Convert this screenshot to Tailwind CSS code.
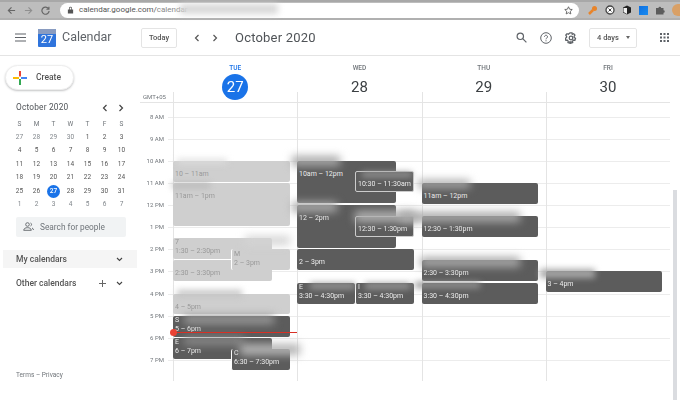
<!DOCTYPE html>
<html lang="en">
<head>
<meta charset="UTF-8">
<title>Calendar</title>
<script src="https://cdn.jsdelivr.net/npm/@tailwindcss/browser@4"></script>
</head>
<body class="bg-white text-[#3c4043] font-['Roboto',sans-serif] overflow-hidden">
<div class="w-[680px] h-[400px] relative overflow-hidden flex flex-col blur-[0.4px]">

  <!-- Browser bar -->
  <div class="h-[20px] shrink-0 bg-[#bdbdbd] border-t-2 border-[#a8a8a8] border-b-2 border-b-[#b0b0b0] flex items-center relative">
    <div class="w-[60px] flex items-center pl-[7px] gap-[8px] text-[#666]">
      <svg width="9" height="9" viewBox="0 0 10 10" fill="none" stroke="#666" stroke-width="1.3"><path d="M9 5H1.5M5 1.5 1.5 5 5 8.5"/></svg>
      <svg width="9" height="9" viewBox="0 0 10 10" fill="none" stroke="#8f8f8f" stroke-width="1.3"><path d="M1 5h7.5M5 1.5 8.5 5 5 8.5"/></svg>
      <svg width="9" height="9" viewBox="0 0 10 10" fill="none" stroke="#666" stroke-width="1.3"><path d="M8.5 3.2A4 4 0 1 0 9 5.5M8.8.8v2.8H6"/></svg>
    </div>
    <div class="ml-0 w-[519px] h-[15px] bg-white rounded-full flex items-center pl-[7px] text-[8px] text-[#555]">
      <svg width="7" height="8" viewBox="0 0 8 9" fill="#555"><path d="M1 4h6v4.500H1zM2.300 4V2.600a1.700 1.700 0 0 1 3.400 0V4h-.8V2.600a.9.9 0 0 0-1.800 0V4z"/></svg>
      <span class="ml-[5px]">calendar.google.com/<span class="text-[#888]">calendar</span></span>
      <svg class="ml-auto mr-[6px]" width="9" height="9" viewBox="0 0 12 12" fill="none" stroke="#555" stroke-width="1.100"><path d="m6 1 1.500 3.300 3.500.4-2.600 2.400.7 3.500L6 8.900l-3.100 1.700.7-3.500L1 4.700l3.500-.4z"/></svg>
    </div>
    <div class="flex items-center gap-[7px] ml-[8px]">
      <svg width="11" height="11" viewBox="0 0 11 11"><circle cx="7.500" cy="3.500" r="2.500" fill="#e8842a"/><path d="M6 5 2 9" stroke="#e8842a" stroke-width="2.500"/></svg>
      <svg width="10" height="10" viewBox="0 0 10 10"><circle cx="5" cy="5" r="4" fill="#fff" stroke="#444" stroke-width="1.300"/><path d="m3.500 3.500 3 3m0-3-3 3" stroke="#444"/></svg>
      <svg width="10" height="10" viewBox="0 0 10 10"><path d="M5 .5 9 2.500v5L5 9.500 1 7.500v-5z" fill="#222"/><path d="M5 3v6L1.500 7V3z" fill="#eee"/></svg>
      <div class="w-[9px] h-[9px] bg-[#1473e6] bg-linear-to-br from-[#0f6fe0] to-[#1a8cf0]"></div>
      <svg width="10" height="10" viewBox="0 0 10 10" fill="#5c5c5c"><path d="M1 3h2.500a1.300 1.300 0 0 1 2.600 0H8.500v2.300a1.200 1.200 0 0 1 0 2.500V9.500H1z"/></svg>
      <div class="w-[8px] h-[12px] rounded-l-full bg-[#d9a066]"></div>
    </div>
    <div class="absolute left-[180px] top-[2px] w-[98px] h-[10px] bg-[#d8d8d8] blur-[3px]"></div>
  </div>

  <!-- App header -->
  <header class="h-[36px] shrink-0 border-b border-[#e4e4e4] flex items-center relative">
    <svg class="ml-[15px]" width="11" height="9" viewBox="0 0 11 9" fill="none" stroke="#5f6368" stroke-width="1.100"><path d="M0 1h11M0 4.500h11M0 8h11"/></svg>
    <div class="ml-[12px] w-[18px] h-[18px] rounded-[1px] bg-[#2f74dc] relative overflow-hidden">
      <div class="h-[5px] bg-[#8a9cc0]"></div>
      <span class="absolute inset-x-0 top-[4px] text-center text-[11px] leading-[14px] text-white">27</span>
    </div>
    <span class="ml-[6px] w-[48px] whitespace-nowrap text-[12.500px] text-[#5f6368]">Calendar</span>
    <button class="ml-[31px] w-[36px] h-[20px] rounded-[2px] border border-[#e4e4e4] text-[7.500px] font-medium text-[#555]">Today</button>
    <svg class="ml-[17px]" width="6" height="8" viewBox="0 0 6 8" fill="none" stroke="#555" stroke-width="1.200"><path d="M4.500 1 1.500 4l3 3"/></svg>
    <svg class="ml-[12px]" width="6" height="8" viewBox="0 0 6 8" fill="none" stroke="#555" stroke-width="1.200"><path d="m1.500 1 3 3-3 3"/></svg>
    <span class="ml-[17px] text-[13px] tracking-[0.2px] text-[#4f5357]">October 2020</span>
    <svg class="ml-auto" width="11" height="11" viewBox="0 0 11 11" fill="none" stroke="#5f6368" stroke-width="1.200"><circle cx="4.300" cy="4.300" r="3.200"/><path d="m6.700 6.700 3.700 3.700"/></svg>
    <svg class="ml-[13px]" width="12" height="12" viewBox="0 0 12 12" fill="none" stroke="#5f6368"><circle cx="6" cy="6" r="5.300"/><path d="M4.500 4.700a1.500 1.500 0 1 1 2.300 1.300c-.6.400-.8.700-.8 1.300M6 8.300v1"/></svg>
    <svg class="ml-[13px]" width="12" height="12" viewBox="0 0 12 12" fill="none" stroke="#5f6368" stroke-width="1.300"><circle cx="6" cy="6" r="1.800"/><path d="M5 .8h2l.3 1.500 1.400-.6 1.200 1.400-.8 1.300.1 1.200 1.300.7-.6 1.900-1.500-.1-.9 1 .2 1.500-1.900.6-.8-1.300H5.800l-.9 1.300L3 10.600l.2-1.500-.9-1-1.500.1-.6-1.900 1.300-.7.100-1.200-.8-1.300 1.200-1.400 1.400.6z"/></svg>
    <div class="ml-[12px] w-[48px] h-[20px] rounded-[2px] border border-[#e4e4e4] flex items-center pl-[7px] text-[7.500px] font-medium text-[#555]">4 days
      <span class="ml-[7px] w-0 h-0 border-x-[2.500px] border-x-transparent border-t-[3px] border-t-[#666]"></span>
    </div>
    <svg class="ml-[23px] mr-[11px]" width="9" height="9" viewBox="0 0 9 9" fill="#5f6368">
      <rect width="2" height="2"/><rect x="3.500" width="2" height="2"/><rect x="7" width="2" height="2"/>
      <rect y="3.500" width="2" height="2"/><rect x="3.500" y="3.500" width="2" height="2"/><rect x="7" y="3.500" width="2" height="2"/>
      <rect y="7" width="2" height="2"/><rect x="3.500" y="7" width="2" height="2"/><rect x="7" y="7" width="2" height="2"/>
    </svg>
  </header>

  <div class="flex-1 flex min-h-0">
    <!-- Sidebar -->
    <aside class="w-[140px] shrink-0 flex flex-col relative">
      <div class="ml-[5px] mt-[9px] w-[69px] h-[25px] rounded-full bg-white border border-[#eee] shadow-[0_1px_2px_rgba(60,64,67,.3)] flex items-center">
        <svg class="ml-[7px]" width="14" height="14" viewBox="0 0 14 14">
          <path d="M6 0h2v5.500H6z" fill="#ea4335"/><path d="M8 6h6v2H8z" fill="#4285f4"/><path d="M6 8h2v6H6z" fill="#34a853"/><path d="M0 6h6v2H0z" fill="#fbbc04"/>
        </svg>
        <span class="ml-[9px] text-[8.500px] font-medium text-[#555]">Create</span>
      </div>
      <div class="ml-[16px] mt-[10px] flex items-center h-[15px]">
        <span class="text-[8.300px] tracking-[0.2px] text-[#4f5357]">October 2020</span>
        <svg class="ml-[34px]" width="6" height="8" viewBox="0 0 6 8" fill="none" stroke="#444" stroke-width="1.200"><path d="M4.500 1 1.500 4l3 3"/></svg>
        <svg class="ml-[10px]" width="6" height="8" viewBox="0 0 6 8" fill="none" stroke="#444" stroke-width="1.200"><path d="m1.500 1 3 3-3 3"/></svg>
      </div>
      <div class="ml-[11px] mt-[2.500px] w-[119px] grid grid-cols-7 text-center text-[6.500px] leading-[13.400px] text-[#555]">
        <span class="text-[#70757a]">S</span><span class="text-[#70757a]">M</span><span class="text-[#70757a]">T</span><span class="text-[#70757a]">W</span><span class="text-[#70757a]">T</span><span class="text-[#70757a]">F</span><span class="text-[#70757a]">S</span>
        <span class="text-[#80868b]">27</span><span class="text-[#80868b]">28</span><span class="text-[#80868b]">29</span><span class="text-[#80868b]">30</span><span>1</span><span>2</span><span>3</span>
        <span>4</span><span>5</span><span>6</span><span>7</span><span>8</span><span>9</span><span>10</span>
        <span>11</span><span>12</span><span>13</span><span>14</span><span>15</span><span>16</span><span>17</span>
        <span>18</span><span>19</span><span>20</span><span>21</span><span>22</span><span>23</span><span>24</span>
        <span>25</span><span>26</span><span class="mx-auto w-[13.400px] rounded-full bg-[#1a73e8] text-white font-medium">27</span><span>28</span><span>29</span><span>30</span><span>31</span>
        <span class="text-[#80868b]">1</span><span class="text-[#80868b]">2</span><span class="text-[#80868b]">3</span><span class="text-[#80868b]">4</span><span class="text-[#80868b]">5</span><span class="text-[#80868b]">6</span><span class="text-[#80868b]">7</span>
      </div>
      <div class="ml-[16px] mt-[5.500px] w-[110px] h-[20px] rounded-[2px] bg-[#f1f3f4] flex items-center pl-[7px] text-[8.300px] text-[#70757a]">
        <svg width="11" height="9" viewBox="0 0 11 9" fill="none" stroke="#5f6368" stroke-width=".9"><circle cx="4.500" cy="2.500" r="1.800"/><path d="M.7 8.300c.2-2 1.800-2.600 3.800-2.600s3.600.6 3.800 2.600zM7.500 1a1.600 1.600 0 0 1 0 3M9 6c.9.300 1.400 1 1.500 2"/></svg>
        <span class="ml-[6px]">Search for people</span>
      </div>
      <div class="ml-[3px] mt-[13px] w-[134px] h-[18px] bg-[#f5f5f5] flex items-center pl-[13px] pr-[14px] pt-[1px] text-[8.500px] font-medium text-[#555]">
        <span>My calendars</span>
        <svg class="ml-auto" width="7" height="5" viewBox="0 0 7 5" fill="none" stroke="#444" stroke-width="1.100"><path d="m1 1 2.500 2.500L6 1"/></svg>
      </div>
      <div class="ml-[3px] mt-[6px] w-[134px] h-[18px] flex items-center pl-[13px] pr-[14px] pt-[1px] text-[8.500px] font-medium text-[#555]">
        <span>Other calendars</span>
        <svg class="ml-auto" width="9" height="9" viewBox="0 0 9 9" fill="none" stroke="#666"><path d="M4.500 1v7M1 4.500h7"/></svg>
        <svg class="ml-[9px]" width="7" height="5" viewBox="0 0 7 5" fill="none" stroke="#444" stroke-width="1.100"><path d="m1 1 2.500 2.500L6 1"/></svg>
      </div>
      <div class="absolute left-[16px] top-[315px] text-[6.500px] text-[#70757a]">Terms – Privacy</div>
    </aside>

    <!-- Calendar -->
    <main class="flex-1 min-w-0 flex flex-col">
      <div class="h-[46px] shrink-0 flex pl-[33px] relative">
        <div class="w-[124.300px] flex flex-col items-center pt-[8px]">
          <span class="text-[6.500px] leading-[9px] font-medium text-[#1a73e8]">TUE</span>
          <span class="mt-[1px] w-[26px] h-[26px] rounded-full bg-[#1a73e8] text-white text-[15px] flex items-center justify-center">27</span>
        </div>
        <div class="w-[124.300px] flex flex-col items-center pt-[8px]">
          <span class="text-[6.500px] leading-[9px] font-medium text-[#70757a]">WED</span>
          <span class="mt-[1px] h-[26px] text-[15px] leading-[26px] text-[#3c4043]">28</span>
        </div>
        <div class="w-[124.300px] flex flex-col items-center pt-[8px]">
          <span class="text-[6.500px] leading-[9px] font-medium text-[#70757a]">THU</span>
          <span class="mt-[1px] h-[26px] text-[15px] leading-[26px] text-[#3c4043]">29</span>
        </div>
        <div class="w-[124.300px] flex flex-col items-center pt-[8px]">
          <span class="text-[6.500px] leading-[9px] font-medium text-[#70757a]">FRI</span>
          <span class="mt-[1px] h-[26px] text-[15px] leading-[26px] text-[#3c4043]">30</span>
        </div>
        <span class="absolute left-[3px] top-[36px] text-[6px] text-[#70757a]">GMT+05</span>
      </div>

      <!-- Time grid -->
      <div class="relative h-[279px] w-[530px] shrink-0 border-t border-[#e4e4e4] ml-0">
        <div class="h-[13.500px]"></div>
        <div class="text-[6px] text-[#70757a]">
          <div class="h-[22.150px] border-t border-[#ececec] ml-[28px]"><span class="block -ml-[28px] -mt-[2px] w-[24px] text-right leading-[1px]">8 AM</span></div>
          <div class="h-[22.150px] border-t border-[#ececec] ml-[28px]"><span class="block -ml-[28px] -mt-[2px] w-[24px] text-right leading-[1px]">9 AM</span></div>
          <div class="h-[22.150px] border-t border-[#ececec] ml-[28px]"><span class="block -ml-[28px] -mt-[2px] w-[24px] text-right leading-[1px]">10 AM</span></div>
          <div class="h-[22.150px] border-t border-[#ececec] ml-[28px]"><span class="block -ml-[28px] -mt-[2px] w-[24px] text-right leading-[1px]">11 AM</span></div>
          <div class="h-[22.150px] border-t border-[#ececec] ml-[28px]"><span class="block -ml-[28px] -mt-[2px] w-[24px] text-right leading-[1px]">12 PM</span></div>
          <div class="h-[22.150px] border-t border-[#ececec] ml-[28px]"><span class="block -ml-[28px] -mt-[2px] w-[24px] text-right leading-[1px]">1 PM</span></div>
          <div class="h-[22.150px] border-t border-[#ececec] ml-[28px]"><span class="block -ml-[28px] -mt-[2px] w-[24px] text-right leading-[1px]">2 PM</span></div>
          <div class="h-[22.150px] border-t border-[#ececec] ml-[28px]"><span class="block -ml-[28px] -mt-[2px] w-[24px] text-right leading-[1px]">3 PM</span></div>
          <div class="h-[22.150px] border-t border-[#ececec] ml-[28px]"><span class="block -ml-[28px] -mt-[2px] w-[24px] text-right leading-[1px]">4 PM</span></div>
          <div class="h-[22.150px] border-t border-[#ececec] ml-[28px]"><span class="block -ml-[28px] -mt-[2px] w-[24px] text-right leading-[1px]">5 PM</span></div>
          <div class="h-[22.150px] border-t border-[#ececec] ml-[28px]"><span class="block -ml-[28px] -mt-[2px] w-[24px] text-right leading-[1px]">6 PM</span></div>
          <div class="h-[22.150px] border-t border-[#ececec] ml-[28px]"><span class="block -ml-[28px] -mt-[2px] w-[24px] text-right leading-[1px]">7 PM</span></div>
        </div>

        <!-- column rules -->
        <div class="absolute left-[33px] -top-[11px] bottom-0 w-px bg-[#e4e4e4]"></div>
        <div class="absolute left-[157px] -top-[11px] bottom-0 w-px bg-[#e4e4e4]"></div>
        <div class="absolute left-[281.500px] -top-[11px] bottom-0 w-px bg-[#e4e4e4]"></div>
        <div class="absolute left-[405.500px] -top-[11px] bottom-0 w-px bg-[#e4e4e4]"></div>

        <!-- Tuesday: x = page x - 140, y = page y - 103 -->
        <div class="absolute left-[33px] top-[58px] w-[117px] h-[20.500px] rounded-[2px] bg-[#cfcfcf] text-[#999] text-[7px] pl-[2px] pt-[9px] leading-[9px]">10 – 11am</div>
        <div class="absolute left-[33px] top-[80px] w-[117px] h-[43px] rounded-[2px] bg-[#cfcfcf] text-[#999] text-[7px] pl-[2px] pt-[9px] leading-[9px]">11am – 1pm</div>
        <div class="absolute left-[33px] top-[135px] w-[99px] h-[21px] rounded-[2px] bg-[#cfcfcf] text-[#999] text-[7px] pl-[2px] leading-[9px]">7<br>1:30 – 2:30pm</div>
        <div class="absolute left-[33px] top-[157px] w-[99px] h-[21px] rounded-[2px] bg-[#cfcfcf] text-[#999] text-[7px] pl-[2px] pt-[9px] leading-[9px]">2:30 – 3:30pm</div>
        <div class="absolute left-[91px] top-[146px] w-[59px] h-[21px] rounded-[2px] bg-[#cfcfcf] border-l border-white text-[#999] text-[7px] pl-[2px] pt-[1px] leading-[9px]">M<br>2 – 3pm</div>
        <div class="absolute left-[33px] top-[190.500px] w-[117px] h-[20.500px] rounded-[2px] bg-[#cfcfcf] text-[#999] text-[7px] pl-[2px] pt-[9px] leading-[9px]">4 – 5pm</div>
        <div class="absolute left-[33px] top-[213px] w-[117px] h-[20.500px] rounded-[2px] bg-[#5c5c5c] text-[#eee] text-[7px] pl-[2px] leading-[9px]">S<br>5 – 6pm</div>
        <div class="absolute left-[33px] top-[235px] w-[99px] h-[21px] rounded-[2px] bg-[#5c5c5c] text-[#eee] text-[7px] pl-[2px] leading-[9px]">E<br>6 – 7pm</div>
        <div class="absolute left-[91px] top-[246px] w-[59px] h-[21px] rounded-[2px] bg-[#5c5c5c] border-l border-white text-[#eee] text-[7px] pl-[2px] leading-[9px]">C<br>6:30 – 7:30pm</div>

        <!-- Wednesday -->
        <div class="absolute left-[157px] top-[58px] w-[99px] h-[42px] rounded-[2px] bg-[#5c5c5c] text-[#eee] text-[7px] pl-[2px] pt-[9px] leading-[9px]">10am – 12pm</div>
        <div class="absolute left-[215px] top-[68px] w-[59px] h-[21px] rounded-[2px] bg-[#5c5c5c] border border-[#ccc] text-[#eee] text-[7px] pl-[2px] pt-[8px] leading-[9px] whitespace-nowrap">10:30 – 11:30am</div>
        <div class="absolute left-[157px] top-[102px] w-[99px] h-[43px] rounded-[2px] bg-[#5c5c5c] text-[#eee] text-[7px] pl-[2px] pt-[9px] leading-[9px]">12 – 2pm</div>
        <div class="absolute left-[215px] top-[113px] w-[59px] h-[21px] rounded-[2px] bg-[#5c5c5c] border border-[#ccc] text-[#eee] text-[7px] pl-[2px] pt-[8px] leading-[9px]">12:30 – 1:30pm</div>
        <div class="absolute left-[157px] top-[146px] w-[117px] h-[21px] rounded-[2px] bg-[#5c5c5c] text-[#eee] text-[7px] pl-[2px] pt-[9px] leading-[9px]">2 – 3pm</div>
        <div class="absolute left-[157px] top-[179.500px] w-[58px] h-[21px] rounded-[2px] bg-[#5c5c5c] text-[#eee] text-[7px] pl-[2px] leading-[9px]">E<br>3:30 – 4:30pm</div>
        <div class="absolute left-[215px] top-[179.500px] w-[59px] h-[21px] rounded-[2px] bg-[#5c5c5c] border-l border-white text-[#eee] text-[7px] pl-[2px] leading-[9px]">I<br>3:30 – 4:30pm</div>

        <!-- Thursday -->
        <div class="absolute left-[281.500px] top-[80px] w-[116.500px] h-[20.500px] rounded-[2px] bg-[#5c5c5c] text-[#eee] text-[7px] pl-[2px] pt-[9px] leading-[9px]">11am – 12pm</div>
        <div class="absolute left-[281.500px] top-[113px] w-[116.500px] h-[21px] rounded-[2px] bg-[#5c5c5c] text-[#eee] text-[7px] pl-[2px] pt-[9px] leading-[9px]">12:30 – 1:30pm</div>
        <div class="absolute left-[281.500px] top-[157px] w-[116.500px] h-[21px] rounded-[2px] bg-[#5c5c5c] text-[#eee] text-[7px] pl-[2px] pt-[9px] leading-[9px]">2:30 – 3:30pm</div>
        <div class="absolute left-[281.500px] top-[180px] w-[116.500px] h-[20.500px] rounded-[2px] bg-[#5c5c5c] text-[#eee] text-[7px] pl-[2px] pt-[9px] leading-[9px]">3:30 – 4:30pm</div>

        <!-- Friday -->
        <div class="absolute left-[405.500px] top-[168px] w-[116.500px] h-[21px] rounded-[2px] bg-[#5c5c5c] text-[#eee] text-[7px] pl-[2px] pt-[9px] leading-[9px]">3 – 4pm</div>

        <!-- smudged titles -->
        <div class="absolute left-[37px] top-[56px] w-[50px] h-[5px] bg-[#dcdcdc] blur-[3px]"></div>
        <div class="absolute left-[32px] top-[80px] w-[38px] h-[5px] bg-[#b8b8b8] blur-[3px]"></div>
        <div class="absolute left-[105px] top-[133px] w-[45px] h-[9px] bg-[#d4d4d4] blur-[4px]"></div>
        <div class="absolute left-[37px] top-[187px] w-[65px] h-[7px] bg-[#c4c4c4] blur-[3px]"></div>
        <div class="absolute left-[44px] top-[212px] w-[90px] h-[9px] bg-[#999] blur-[4px]"></div>
        <div class="absolute left-[44px] top-[234px] w-[60px] h-[8px] bg-[#8c8c8c] blur-[4px]"></div>
        <div class="absolute left-[100px] top-[241px] w-[60px] h-[11px] bg-[#b4b4b4] blur-[4px]"></div>
        <div class="absolute left-[152px] top-[53px] w-[48px] h-[10px] bg-[#a8a8a8] blur-[4px]"></div>
        <div class="absolute left-[222px] top-[69px] w-[50px] h-[5px] bg-[#9a9a9a] blur-[3px]"></div>
        <div class="absolute left-[152px] top-[99px] w-[45px] h-[10px] bg-[#a8a8a8] blur-[4px]"></div>
        <div class="absolute left-[215px] top-[108px] w-[60px] h-[11px] bg-[#b0b0b0] blur-[4px]"></div>
        <div class="absolute left-[170px] top-[180px] w-[45px] h-[6px] bg-[#999] blur-[3px]"></div>
        <div class="absolute left-[225px] top-[180px] w-[45px] h-[6px] bg-[#999] blur-[3px]"></div>
        <div class="absolute left-[278px] top-[77px] w-[52px] h-[8px] bg-[#a8a8a8] blur-[4px]"></div>
        <div class="absolute left-[260px] top-[109px] w-[120px] h-[10px] bg-[#a8a8a8] blur-[4px]"></div>
        <div class="absolute left-[280px] top-[154px] w-[100px] h-[10px] bg-[#a8a8a8] blur-[4px]"></div>
        <div class="absolute left-[275px] top-[179px] w-[65px] h-[6px] bg-[#949494] blur-[3px]"></div>
        <div class="absolute left-[400px] top-[166px] w-[55px] h-[9px] bg-[#a8a8a8] blur-[3px]"></div>

        <!-- now marker -->
        <div class="absolute left-[33px] top-[229px] w-[124px] h-px bg-[#d93025]"></div>
        <div class="absolute left-[29.500px] top-[226px] w-[7px] h-[7px] rounded-full bg-[#ea4335]"></div>
      </div>
    </main>
  </div>

  <!-- scrollbar -->
  <div class="absolute left-[673px] top-[190px] w-[4px] h-[210px] bg-[#dadce0]"></div>
</div>
</body>
</html>
